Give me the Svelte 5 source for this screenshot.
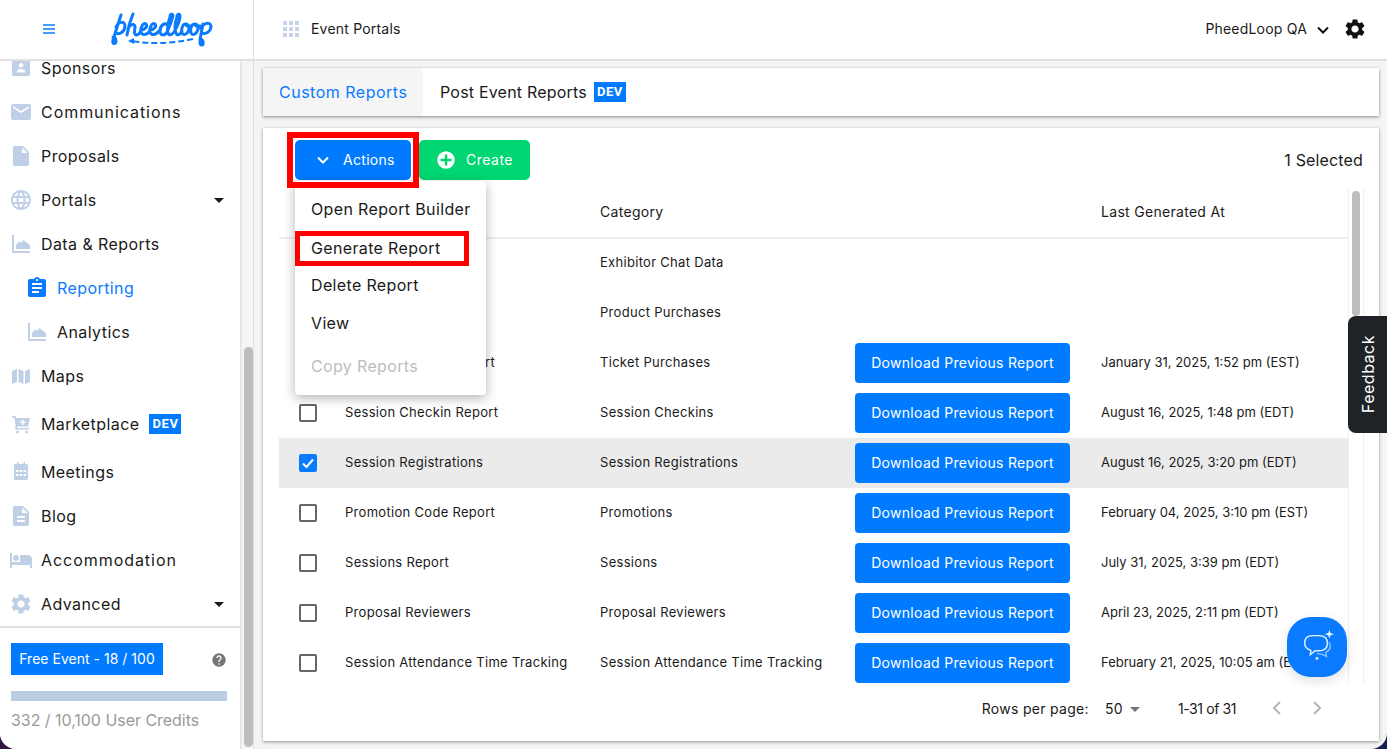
<script>
  const p = {
    email: 'M20 4H4c-1.1 0-2 .9-2 2v12c0 1.1.9 2 2 2h16c1.1 0 2-.9 2-2V6c0-1.1-.9-2-2-2zm0 4l-8 5-8-5V6l8 5 8-5v2z',
    file: 'M14 2H6c-1.1 0-2 .9-2 2v16c0 1.1.9 2 2 2h12c1.1 0 2-.9 2-2V8l-6-6zm-1 7V3.5L18.5 9H13z',
    doc: 'M14 2H6c-1.1 0-2 .9-2 2v16c0 1.1.9 2 2 2h12c1.1 0 2-.9 2-2V8l-6-6zm2 16H8v-2h8v2zm0-4H8v-2h8v2zm-3-5V3.5L18.5 9H13z',
    globe: 'M11.99 2C6.47 2 2 6.48 2 12s4.47 10 9.99 10C17.52 22 22 17.52 22 12S17.52 2 11.99 2zm6.93 6h-2.95c-.32-1.25-.78-2.45-1.38-3.56 1.84.63 3.37 1.91 4.33 3.56zM12 4.04c.83 1.2 1.48 2.53 1.91 3.96h-3.82c.43-1.43 1.08-2.76 1.91-3.96zM4.26 14C4.1 13.36 4 12.69 4 12s.1-1.36.26-2h3.38c-.08.66-.14 1.32-.14 2 0 .68.06 1.34.14 2H4.26zm.82 2h2.95c.32 1.25.78 2.45 1.38 3.56-1.84-.63-3.37-1.9-4.33-3.56zm2.95-8H5.08c.96-1.66 2.49-2.93 4.33-3.56C8.81 5.55 8.35 6.75 8.03 8zM12 19.96c-.83-1.2-1.48-2.53-1.91-3.96h3.82c-.43 1.43-1.08 2.76-1.91 3.96zM14.34 14H9.66c-.09-.66-.16-1.32-.16-2 0-.68.07-1.35.16-2h4.68c.09.65.16 1.32.16 2 0 .68-.07 1.34-.16 2zm.25 5.56c.6-1.11 1.06-2.31 1.38-3.56h2.95c-.96 1.65-2.49 2.93-4.33 3.56zM16.36 14c.08-.66.14-1.32.14-2 0-.68-.06-1.34-.14-2h3.38c.16.64.26 1.31.26 2s-.1 1.36-.26 2h-3.38z',
    chart: 'M3 3h2v16h16v2H3zM7 17v-4l3-3.500 2 1.500 2.500-3L18 11l3 2v4z',
    clip: 'M19 3h-4.18C14.4 1.84 13.3 1 12 1c-1.3 0-2.4.84-2.82 2H5c-1.1 0-2 .9-2 2v14c0 1.1.9 2 2 2h14c1.1 0 2-.9 2-2V5c0-1.1-.9-2-2-2zm-7 0c.55 0 1 .45 1 1s-.45 1-1 1-1-.45-1-1 .45-1 1-1zm2 14H7v-2h7v2zm3-4H7v-2h10v2zm0-4H7V7h10v2z',
    map: 'M3 7l5-2v13l-5 2zM9.500 5l5 2v13l-5-2zM16 7l5-2v13l-5 2z',
    cart: 'M3 4h3.500l.6 2H21l-2 8.500H8.500l-.4 1.500H20v1.500H6l.7-3.500L5.300 5.500H3zM13 7.500v2h-2v1.500h2v2h1.500v-2h2V9.500h-2v-2zM8.500 18.500a1.500 1.500 0 1 0 .01 0zM17.500 18.500a1.500 1.500 0 1 0 .01 0z',
    cal: 'M8 2h1.500v2h5V2H16v2h1.500c.8 0 1.500.7 1.500 1.500v13c0 .8-.7 1.500-1.500 1.500h-11C5.700 20 5 19.300 5 18.500v-13C5 4.700 5.700 4 6.500 4H8zM7 10v2h2.500v-2zM10.800 10v2h2.500v-2zM14.500 10v2H17v-2zM7 14v2h2.500v-2zM10.800 14v2h2.500v-2zM14.500 14v2H17v-2z',
    bed: 'M7 13c1.660 0 3-1.340 3-3S8.660 7 7 7s-3 1.340-3 3 1.340 3 3 3zm12-6h-8v7H3V5H1v15h2v-3h18v3h2v-9c0-2.210-1.790-4-4-4z',
    gear: 'M19.140 12.940c.04-.3.06-.61.06-.94 0-.32-.02-.64-.07-.94l2.030-1.580c.18-.14.23-.41.12-.61l-1.920-3.320c-.12-.22-.37-.29-.59-.22l-2.390.96c-.5-.38-1.030-.7-1.620-.94l-.36-2.540c-.04-.24-.24-.41-.48-.41h-3.840c-.24 0-.43.17-.47.41l-.36 2.540c-.59.24-1.130.57-1.620.94l-2.390-.96c-.22-.08-.47 0-.59.22L2.740 8.870c-.12.21-.08.47.12.61l2.030 1.580c-.05.3-.09.63-.09.94s.02.64.07.94l-2.030 1.580c-.18.14-.23.41-.12.61l1.920 3.320c.12.22.37.29.59.22l2.390-.96c.5.38 1.030.7 1.620.94l.36 2.540c.05.24.24.41.48.41h3.840c.24 0 .44-.17.47-.41l.36-2.540c.59-.24 1.130-.56 1.620-.94l2.390.96c.22.08.47 0 .59-.22l1.920-3.320c.12-.22.07-.47-.12-.61l-2.010-1.580zM12 15.600c-1.980 0-3.600-1.620-3.600-3.600s1.620-3.600 3.600-3.600 3.600 1.620 3.600 3.600-1.620 3.600-3.600 3.600z',
    badge: 'M10 -1h4v3h5c1.100 0 2 .9 2 2v14c0 1.100-.9 2-2 2H5c-1.100 0-2-.9-2-2V4c0-1.100.9-2 2-2h5zM12 7a2.300 2.300 0 1 0 .01 0zM8 16.500h8V15c0-1.300-2.500-2-4-2s-4 .7-4 2z'
  };
  const nav = [
    { t: 'Sponsors', i: 'badge' },
    { t: 'Communications', i: 'email', wide: true },
    { t: 'Proposals', i: 'file' },
    { t: 'Portals', i: 'globe', caret: true },
    { t: 'Data & Reports', i: 'chart' },
    { t: 'Reporting', i: 'clip', sub: true, active: true },
    { t: 'Analytics', i: 'chart', sub: true },
    { t: 'Maps', i: 'map' },
    { t: 'Marketplace', i: 'cart', dev: true },
    { t: 'Meetings', i: 'cal' },
    { t: 'Blog', i: 'doc' },
    { t: 'Accommodation', i: 'bed', wide: true },
    { t: 'Advanced', i: 'gear', caret: true }
  ];
  const rows = [
    { n: 'Exhibitor Chat', c: 'Exhibitor Chat Data', d: '' },
    { n: 'Product Report', c: 'Product Purchases', d: '' },
    { n: 'Ticket Purchase Report', c: 'Ticket Purchases', d: 'January 31, 2025, 1:52 pm (EST)' },
    { n: 'Session Checkin Report', c: 'Session Checkins', d: 'August 16, 2025, 1:48 pm (EDT)' },
    { n: 'Session Registrations', c: 'Session Registrations', d: 'August 16, 2025, 3:20 pm (EDT)', sel: true },
    { n: 'Promotion Code Report', c: 'Promotions', d: 'February 04, 2025, 3:10 pm (EST)' },
    { n: 'Sessions Report', c: 'Sessions', d: 'July 31, 2025, 3:39 pm (EDT)' },
    { n: 'Proposal Reviewers', c: 'Proposal Reviewers', d: 'April 23, 2025, 2:11 pm (EDT)' },
    { n: 'Session Attendance Time Tracking', c: 'Session Attendance Time Tracking', d: 'February 21, 2025, 10:05 am (EST)' }
  ];
  const menu = ['Open Report Builder', 'Generate Report', 'Delete Report', 'View', 'Copy Reports'];
</script>

<div class="shell">
  <div class="left">
    <div class="brand">
      <svg class="burger" viewBox="0 0 12 10"><path d="M0 1h12M0 5h12M0 9h12" /></svg>
      <svg class="logo" viewBox="0 0 102 36" aria-label="pheedloop">
        <path class="script" d="M11 3C8 12 5 22 3 28C2 32 6 33 6 29C6 26 4 25 3 25M6 15C9 9 15 9 15 14C15 20 9 23 6 21M23 2C20 9 18 16 17 23M18 17C20 12 25 11 25 15C25 18 23 22 26 23C28 23 30 21 31 19M31 18C35 18 38 14 36 12C33 10 30 16 31 20C32 24 37 23 40 19M40 18C44 18 47 14 45 12C42 10 39 16 40 20C41 24 46 23 49 19M58 13C54 10 50 14 50 19C50 24 55 24 57 20C59 16 62 8 63 4C63 1 60 2 60 5C58 11 57 17 58 21C59 24 62 23 64 20C67 15 70 8 70 4C70 1 67 2 67 5C65 11 64 17 66 21C67 24 70 23 72 19M76 12C72 12 71 18 72 21C74 24 78 22 79 17C79 14 78 12 76 12C76 14 78 15 81 14M85 12C81 12 80 18 81 21C83 24 87 22 88 17C88 14 87 12 85 12C85 14 87 15 90 14M93 12C92 18 90 25 90 30C90 34 94 34 93 30C93 28 91 27 90 27M91 17C93 11 100 9 101 14C101 19 96 23 92 21" />
        <path class="dash" d="M83 27Q50 34 22 29" />
        <path class="head" d="M24 26l-6 3 6 3z" />
      </svg>
    </div>
    <div class="below">
      <aside>
        <nav>
          <div class="scrolled">
            {#each nav as n}
              <div class="item" class:sub={n.sub} class:active={n.active} class:tall={n.dev} class:wide={n.wide}>
                <svg class="ico" viewBox="0 0 24 24"><path fill-rule="evenodd" d={p[n.i]} /></svg>
                <span>{n.t}</span>
                {#if n.dev}<b class="dev">DEV</b>{/if}
                {#if n.caret}<i class="caret"></i>{/if}
              </div>
            {/each}
          </div>
        </nav>
        <div class="credits">
          <div class="freeline">
            <span class="free">Free Event - 18 / 100</span>
            <svg class="help" viewBox="0 0 24 24"><path d="M12 2a10 10 0 1 0 .01 0zM13 19h-2v-2h2zm2.070-7.750-.9.920C13.450 12.900 13 13.500 13 15h-2v-.5c0-1.100.45-2.100 1.170-2.830l1.240-1.260c.37-.36.590-.86.590-1.410 0-1.100-.9-2-2-2s-2 .9-2 2H8c0-2.210 1.790-4 4-4s4 1.790 4 4c0 .88-.36 1.680-.93 2.250z" /></svg>
          </div>
          <div class="bar"></div>
          <div class="usage">332 / 10,100 User Credits</div>
        </div>
      </aside>
      <div class="strip"><div class="thumb"></div></div>
    </div>
  </div>

  <div class="right">
    <header>
      <svg class="grid" viewBox="0 0 16 16"><path d="M0 0h4v4H0zM6 0h4v4H6zM12 0h4v4h-4zM0 6h4v4H0zM6 6h4v4H6zM12 6h4v4h-4zM0 12h4v4H0zM6 12h4v4H6zM12 12h4v4h-4z" /></svg>
      <span class="portal">Event Portals</span>
      <span class="org">PheedLoop QA</span>
      <svg class="chev" viewBox="0 0 12 8"><path d="M1 1.500l5 5 5-5" /></svg>
      <svg class="cog" viewBox="0 0 24 24"><path fill-rule="evenodd" d={p.gear} /></svg>
    </header>
    <main>
      <div class="tabs">
        <div class="tab on">Custom Reports</div>
        <div class="tab">Post Event Reports<b class="dev">DEV</b></div>
      </div>
      <section class="card">
        <div class="toolbar">
          <button class="btn blue">
            <svg class="bchev" viewBox="0 0 12 8"><path d="M1 1.500l5 5 5-5" /></svg>
            Actions
          </button>
          <button class="btn green">
            <svg class="plus" viewBox="0 0 20 20"><circle cx="10" cy="10" r="10" fill="#fff" /><path d="M10 4.500v11M4.500 10h11" /></svg>
            Create
          </button>
          <span class="selected">1 Selected</span>
        </div>
        <div class="tablewrap">
          <div class="table">
            <div class="row head">
              <div></div><div>Name</div><div>Category</div><div></div><div>Last Generated At</div>
            </div>
            {#each rows as r}
              <div class="row" class:sel={r.sel}>
                <div><span class="box" class:checked={r.sel}>{#if r.sel}<svg viewBox="0 0 18 18"><path d="M4 9.500l3.500 3.500L14 5.500" /></svg>{/if}</span></div>
                <div class="txt">{r.n}</div>
                <div class="txt">{r.c}</div>
                <div>{#if r.d}<button class="dl">Download Previous Report</button>{/if}</div>
                <div class="txt date">{r.d}</div>
              </div>
            {/each}
          </div>
          <div class="vbar"><div class="vthumb"></div></div>
        </div>
        <div class="pager">
          <span>Rows per page:</span>
          <span class="num">50</span><i class="pcaret"></i>
          <span class="count">1-31 of 31</span>
          <svg class="pg" viewBox="0 0 10 16"><path d="M8 2L2 8l6 6" /></svg>
          <svg class="pg" viewBox="0 0 10 16"><path d="M2 2l6 6-6 6" /></svg>
        </div>

        <div class="menu">
          {#each menu as m, i}
            <div class="mi m{i}">{m}</div>
          {/each}
        </div>
        <div class="redbox top"></div>
        <div class="redbox gen"></div>
      </section>
    </main>
  </div>

  <div class="feedback"><span>Feedback</span></div>
  <div class="chat">
    <svg viewBox="0 0 40 40">
      <path class="b1" d="M15 8h7c6 0 9 3 9 8s-3 8-9 8h-4l-5 4 .5-4.500C9 22 7 19.500 7 16c0-5 3-8 8-8z" />
      <path class="b2" d="M33 15c2 5 0 9-4 11l1 4-5-2.500c-2 0-4 0-5-1" />
      <path class="s" d="M33 2l1.200 3.300L38 6.500l-3.800 1.200L33 11l-1.200-3.300L28 6.500l3.800-1.200z" />
      <circle class="s" cx="20" cy="32" r="1.500" />
    </svg>
  </div>
</div>

<style>
  :global(body) { margin: 0; background: linear-gradient(90deg, #33183f, #14204f); }
  .shell {
    position: relative; width: 1387px; height: 749px; overflow: hidden;
    display: flex; background: #f4f4f4; border-radius: 0 0 16px 16px;
    font-family: Inter, "Noto Sans", sans-serif; color: #1a1a1a;
  }
  .left { width: 254px; flex: none; display: flex; flex-direction: column; }
  .brand {
    height: 57px; padding-bottom: 2px; flex: none; background: #fff; border-bottom: 2px solid #e0e0e0; border-right: 1px solid #e0e0e0;
    display: flex; align-items: center; box-sizing: content-box;
  }
  .burger { width: 12px; height: 10px; margin-left: 43px; fill: none; stroke: #0a7bff; stroke-width: 1.600; }
  .logo { width: 102px; height: 36px; margin-left: 55px; margin-top: 2px; overflow: visible; }
  .script { fill: none; stroke: #0a7bff; stroke-width: 3; stroke-linecap: round; stroke-linejoin: round; }
  .dash { fill: none; stroke: #0a7bff; stroke-width: 2; stroke-dasharray: 6 3; }
  .head { fill: #0a7bff; }
  .below { flex: 1; min-height: 0; display: flex; }
  aside { width: 240px; background: #fff; border-right: 2px solid #e6e6e6; display: flex; flex-direction: column; box-sizing: content-box; }
  nav { height: 565px; overflow: hidden; flex: none; }
  .scrolled { margin-top: -15px; }
  .item { height: 44px; display: flex; align-items: center; padding-left: 9px; font-size: 16px; letter-spacing: .42px; position: relative; }
  .item.wide { letter-spacing: .95px; }
  .item.tall { height: 52px; }
  .item.sub { padding-left: 25px; }
  .item.active { color: #0a7bff; }
  .ico { width: 24px; height: 24px; flex: none; margin-right: 8px; fill: #bfcfe5; }
  .item.active .ico { fill: #0a7bff; }
  .caret { position: absolute; left: 214px; top: 20px; border: 5px solid transparent; border-top-color: #1a1a1a; border-bottom: 0; }
  .dev {
    display: inline-block; background: #007bff; color: #fff; font: bold 13px Roboto, sans-serif;
    letter-spacing: .6px; line-height: 20px; width: 32px; text-align: center; margin-left: 10px; flex: none;
  }
  .credits { flex: 1; border-top: 2px solid #e0e0e0; padding: 15px 13px 0 11px; }
  .freeline { display: flex; justify-content: space-between; align-items: center; height: 32px; }
  .free { background: #007bff; color: #fff; font-size: 14px; line-height: 32px; width: 152px; text-align: center; letter-spacing: .02px; }
  .help { width: 16px; height: 16px; fill: #757575; margin-top: 2px; }
  .bar { height: 10px; background: #bccde4; margin-top: 16px; }
  .usage { margin-top: 9px; font-size: 16px; color: #9a9a9a; letter-spacing: -.04px; }
  .strip { flex: 1; position: relative; background: #f5f5f5; border-right: 1px solid #e0e0e0; display: flex; flex-direction: column; justify-content: flex-end; }
  .thumb { width: 9px; height: 400px; background: #bdbdbd; border-radius: 5px; margin: 0 0 2px 2px; }

  .right { flex: 1; min-width: 0; display: flex; flex-direction: column; }
  header { height: 57px; padding: 0 22px 2px 29px; flex: none; background: #fff; border-bottom: 2px solid #e0e0e0; display: flex; align-items: center; font-size: 14px; box-sizing: content-box; }
  .grid { width: 16px; height: 16px; fill: #c6d3e8; margin-right: 12px; }
  .portal { letter-spacing: .2px; flex: 1; }
  .org { letter-spacing: .2px; }
  .chev { width: 12px; height: 8px; margin: 2px 14px 0 10px; fill: none; stroke: #111; stroke-width: 2; }
  .cog { width: 24px; height: 24px; fill: #111; margin-right: -2px; }

  main { flex: 1; min-height: 0; padding: 7px 8px 8px 9px; display: flex; flex-direction: column; gap: 12px; }
  .tabs { height: 48px; flex: none; background: #fff; display: flex; box-shadow: 0 1px 3px rgba(0,0,0,.45); }
  .tab { padding: 0 17px; display: flex; align-items: center; font-size: 16px; letter-spacing: .2px; white-space: nowrap; }
  .tab.on { background: #f5f5f5; color: #0a7bff; width: 160px; box-sizing: border-box; padding: 0 0 0 16px; letter-spacing: .5px; }
  .tab .dev { margin-left: 7px; }
  .card { position: relative; flex: 1; min-height: 0; background: #fff; box-shadow: 0 1px 3px rgba(0,0,0,.4); padding: 0 15px 0 16px; display: flex; flex-direction: column; }
  .toolbar { height: 56px; padding: 4px 1px 0 16px; flex: none; display: flex; align-items: center; gap: 8px; }
  .btn { height: 40px; border: 0; border-radius: 5px; color: #fff; font: 14px Inter, sans-serif; letter-spacing: .3px; display: flex; align-items: center; padding: 0 0 1px; }
  .blue { width: 116px; background: #007bff; }
  .green { width: 111px; background: #00d672; letter-spacing: .5px; }
  .bchev { width: 12px; height: 8px; fill: none; stroke: #fff; stroke-width: 2; margin: 0 14px 0 22px; }
  .plus { width: 20px; height: 20px; margin: 0 10px 0 17px; fill: none; stroke: #00d672; stroke-width: 2.500; }
  .selected { margin-left: auto; font-size: 16px; letter-spacing: .15px; }
  .tablewrap { height: 495px; flex: none; display: flex; overflow: hidden; }
  .table { width: 1069px; flex: none; }
  .row { height: 50px; display: grid; grid-template-columns: 66px 255px 255px 246px 1fr; align-items: center; font-size: 13px; letter-spacing: .3px; }
  .row > div { white-space: nowrap; }
  .txt { padding-bottom: 2px; }
  .row.head { height: 51px; margin-bottom: -1px; border-bottom: 2px solid #eee; box-sizing: border-box; padding-bottom: 2px; font-size: 14px; }
  .row.sel { background: #ebebeb; }
  .box { display: block; width: 14px; height: 14px; border: 2px solid #666; border-radius: 2px; margin-left: 20px; }
  .box.checked { background: #0a7bff; border-color: #0a7bff; position: relative; }
  .box svg { position: absolute; left: -2px; top: -2px; width: 18px; height: 18px; fill: none; stroke: #fff; stroke-width: 2; }
  .dl { width: 215px; height: 40px; background: #007bff; color: #fff; border: 0; border-radius: 4px; font: 14px Inter, sans-serif; letter-spacing: .3px; padding: 0 0 2px; display: block; }
  .date { letter-spacing: 0; }
  .vbar { width: 16px; flex: none; background: #fff; border-left: 1px solid #f0f0f0; border-right: 1px solid #f0f0f0; box-sizing: border-box; padding: 3px 3px 0 3px; }
  .vthumb { height: 125px; background: #bdbdbd; border-radius: 5px; }
  .pager { flex: 1; display: flex; align-items: center; justify-content: flex-end; padding: 0 42px 8px 0; font-size: 14px; letter-spacing: .3px; }
  .num { margin-left: 16px; }
  .pcaret { border: 5px solid transparent; border-top-color: #757575; border-bottom: 0; margin: 2px 0 0 7px; }
  .count { margin: 0 36px 0 38px; letter-spacing: -.4px; }
  .pg { width: 10px; height: 16px; fill: none; stroke: #b5b5b5; stroke-width: 2; }
  .pg + .pg { margin-left: 30px; }

  .redbox { position: absolute; box-sizing: border-box; border: 5px solid #f00; pointer-events: none; }
  .redbox.top { left: 24px; top: 4px; width: 132px; height: 56px; border-width: 6px; }
  .redbox.gen { left: 32px; top: 103px; width: 174px; height: 35px; }
  .menu { position: absolute; left: 32px; top: 53px; width: 191px; height: 214px; box-sizing: border-box; background: #fff; border-radius: 4px; box-shadow: 0 3px 12px rgba(0,0,0,.3); padding-top: 9px; }
  .mi { height: 38px; line-height: 38px; padding-left: 16px; font-size: 16px; letter-spacing: .35px; }
  .m1 { margin-top: 1px; }
  .m2 { margin-top: -1px; }
  .m4 { margin-top: 5px; color: #bdbdbd; }

  .feedback { position: absolute; right: 0; top: 316px; width: 39px; height: 117px; background: #1f2227; border-radius: 8px 0 0 8px; display: flex; align-items: center; justify-content: center; }
  .feedback span { writing-mode: vertical-rl; transform: rotate(180deg); color: #fff; font-size: 16px; letter-spacing: .5px; }
  .chat { position: absolute; left: 1287px; top: 617px; width: 60px; height: 60px; background: #0a7bff; border-radius: 24px; box-shadow: 0 4px 12px rgba(0,0,0,.12); display: flex; align-items: center; justify-content: center; }
  .chat svg { width: 38px; height: 38px; fill: none; }
  .b1 { stroke: #e6f1ff; stroke-width: 1.500; }
  .b2 { stroke: #8ec0ff; stroke-width: 1.500; }
  .s { fill: #e6f1ff; }
</style>
